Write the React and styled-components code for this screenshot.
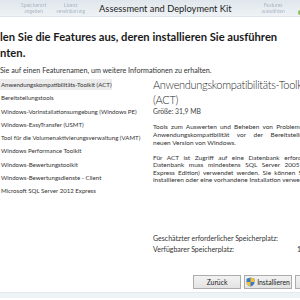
import React from 'react';
import styled, { createGlobalStyle } from 'styled-components';

const features = [
	'Anwendungskompatibilitäts-Toolkit (ACT)',
	'Bereitstellungstools',
	'Windows-Vorinstallationsumgebung (Windows PE)',
	'Windows-EasyTransfer (USMT)',
	'Tool für die Volumenaktivierungsverwaltung (VAMT)',
	'Windows Performance Toolkit',
	'Windows-Bewertungstoolkit',
	'Windows-Bewertungsdienste - Client',
	'Microsoft SQL Server 2012 Express',
];

const descLines = [
	'Tools zum Auswerten und Beheben von Problemen mit der',
	'Anwendungskompatibilität vor der Bereitstellung einer',
	'neuen Version von Windows.',
];

const dbLines = [
	'Für ACT ist Zugriff auf eine Datenbank erforderlich. Als',
	'Datenbank muss mindestens SQL Server 2005 (oder die',
	'Express Edition) verwendet werden. Sie können SQL Server',
	'installieren oder eine vorhandene Installation verwenden.',
];

const steps = [
	['Speicherort', 'angeben'],
	['Lizenz', 'vereinbarung'],
];

const Shield = () => (
	<svg width='9' height='10' viewBox='0 0 9 10'>
		<path d='M4.5 0.5 L8.5 1.8 V5 C8.5 7.5 6.5 9 4.5 9.6 C2.5 9 0.5 7.5 0.5 5 V1.8 Z' fill='#3a78c8' />
		<path d='M4.5 0.5 L8.5 1.8 V5 H4.5 Z' fill='#f2c230' />
		<path d='M4.5 5 H0.5 C0.5 7.5 2.5 9 4.5 9.6 Z' fill='#f2c230' />
	</svg>
);

const App = () => {
	return (
		<>
			<GlobalStyle />
			<Window>
				<TitleBar>
					{steps.map(([a, b]) => (
						<Faded key={a}>
							{a}
							<br />
							{b}
						</Faded>
					))}
					<Title>Assessment and Deployment Kit</Title>
					<Faded>
						Features
						<br />
						auswählen
					</Faded>
					<Dot />
				</TitleBar>
				<Heading>
					len Sie die Features aus, deren installieren Sie ausführen
					<br />
					nten.
				</Heading>
				<Hint>Sie auf einen Featurenamen, um weitere Informationen zu erhalten.</Hint>
				<Columns>
					<List>
						{features.map((f, i) => (
							<Item key={f} selected={i === 0}>
								{f}
							</Item>
						))}
					</List>
					<Details>
						<DetailTitle>
							Anwendungskompatibilitäts-Toolkit
							<br />
							(ACT)
						</DetailTitle>
						<Size>Größe: 31,9 MB</Size>
						<Para gap={7.5} lh={8}>
							{descLines.map((l, i) => (
								<Line key={l} last={i === descLines.length - 1}>
									{l}
								</Line>
							))}
						</Para>
						<Para gap={7} lh={7.5}>
							{dbLines.map((l, i) => (
								<Line key={l} last={i === dbLines.length - 1}>
									{l}
								</Line>
							))}
						</Para>
						<Storage>
							<span>Geschätzter erforderlicher Speicherplatz:</span>
							<Value>1,9 GB</Value>
							<span>Verfügbarer Speicherplatz:</span>
							<Value>16,3 GB</Value>
						</Storage>
					</Details>
				</Columns>
				<Buttons>
					<Button>Zurück</Button>
					<Button>
						<Shield />
						Installieren
					</Button>
					<Button>Abbrechen</Button>
				</Buttons>
				<Footer />
			</Window>
		</>
	);
};

const GlobalStyle = createGlobalStyle`
	*, *::before, *::after {
		box-sizing: border-box;
	}
	html, body {
		margin: 0;
		padding: 0;
		background: #ffffff;
	}
	body {
		font-family: 'Lato', 'Noto Sans', sans-serif;
		color: #2b2b2b;
	}
`;

const Window = styled.div`
	width: 300px;
	height: 300px;
	overflow: hidden;
	background: #ffffff;
`;
const TitleBar = styled.div`
	height: 17px;
	display: flex;
	align-items: center;
	gap: 10px;
	padding-left: 21px;
	background: linear-gradient(#e0e7ec, #eef2f5);
	border-bottom: 1px solid #dfe5ea;
	white-space: nowrap;
`;
const Faded = styled.span`
	font-size: 5px;
	line-height: 6px;
	text-align: center;
	color: #aab8c4;
	filter: blur(0.6px);
`;
const Title = styled.span`
	font-size: 9.3px;
	color: #1e1e1e;
	padding: 0 20px 0 4px;
`;
const Dot = styled.span`
	margin-left: auto;
	margin-right: -3px;
	margin-top: 8px;
	width: 5px;
	height: 5px;
	border-radius: 50%;
	background: #8fbf5a;
	filter: blur(0.5px);
`;
const Heading = styled.h1`
	margin: 12px 0 0 0;
	height: 32px;
	font-size: 11.2px;
	line-height: 16px;
	font-weight: 700;
	color: #1a1a1a;
	white-space: nowrap;
`;
const Hint = styled.p`
	margin: 5px 0 0 0;
	height: 9px;
	font-size: 7.2px;
	line-height: 9px;
	color: #333;
	white-space: nowrap;
`;
const Columns = styled.div`
	height: 200px;
	display: flex;
	gap: 41px;
	padding-top: 4px;
`;
const List = styled.div`
	width: 112px;
	flex-shrink: 0;
	display: flex;
	flex-direction: column;
	gap: 2.3px;
`;
const Item = styled.div`
	height: 11px;
	line-height: 11px;
	font-size: 6.1px;
	color: #333;
	padding-left: 1px;
	white-space: nowrap;
	background: ${(p) => (p.selected ? '#ececec' : 'transparent')};
`;
const Details = styled.div`
	width: 179px;
	flex-shrink: 0;
	display: flex;
	flex-direction: column;
	margin-top: -1px;
`;
const DetailTitle = styled.div`
	font-size: 11px;
	line-height: 14.5px;
	font-weight: 300;
	letter-spacing: -0.3px;
	color: #2a2a2a;
	white-space: nowrap;
`;
const Size = styled.div`
	font-size: 6.8px;
	line-height: 8px;
	color: #444;
`;
const Para = styled.div`
	margin-top: ${(p) => p.gap}px;
	font-size: 6.5px;
	line-height: ${(p) => p.lh}px;
	color: #333;
`;
const Line = styled.div`
	text-align: justify;
	text-align-last: ${(p) => (p.last ? 'left' : 'justify')};
	white-space: nowrap;
`;
const Storage = styled.div`
	margin-top: auto;
	margin-bottom: 20px;
	display: grid;
	grid-template-columns: 144px max-content;
	font-size: 7px;
	line-height: 11px;
	color: #333;
	white-space: nowrap;
`;
const Value = styled.span`
	justify-self: end;
`;
const Buttons = styled.div`
	height: 17px;
	display: flex;
	gap: 3px;
	padding-left: 193px;
	white-space: nowrap;
`;
const Button = styled.div`
	flex-shrink: 0;
	width: 48px;
	height: 14px;
	display: flex;
	align-items: center;
	justify-content: center;
	gap: 2px;
	font-size: 6.8px;
	color: #222;
	background: linear-gradient(#f2f2f2, #e3e3e3);
	border: 1px solid #acacac;
`;
const Footer = styled.div`
	height: 6px;
	background: #eef3f6;
	border-top: 1px solid #e3e9ee;
`;

export default App;
